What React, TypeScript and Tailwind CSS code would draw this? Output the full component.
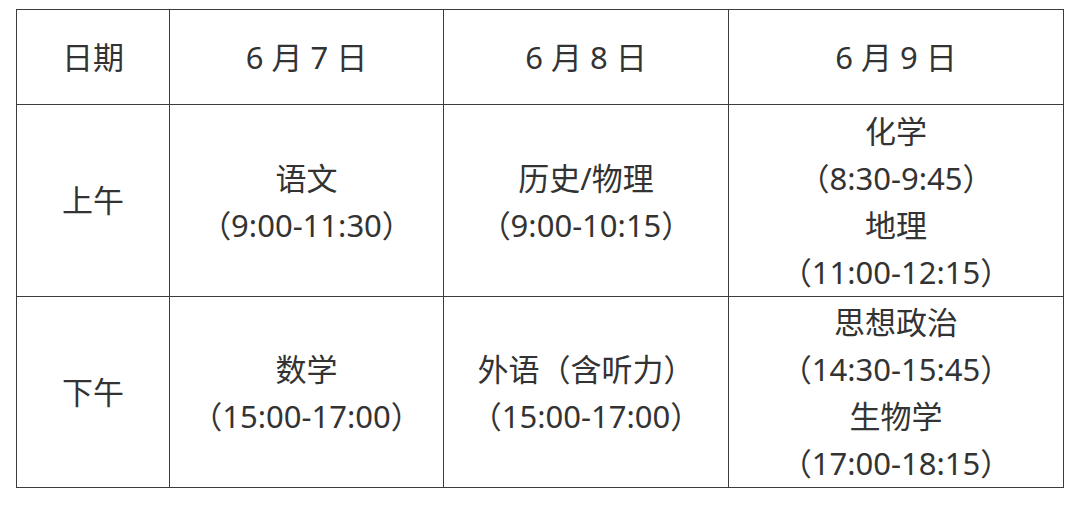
const days = ['6 月 7 日', '6 月 8 日', '6 月 9 日'];

const rows: { label: string; height: string; cells: string[][] }[] = [
  {
    label: '上午',
    height: 'h-[192px]',
    cells: [
      ['语文', '（9:00-11:30）'],
      ['历史/物理', '（9:00-10:15）'],
      ['化学', '（8:30-9:45）', '地理', '（11:00-12:15）'],
    ],
  },
  {
    label: '下午',
    height: 'h-[191px]',
    cells: [
      ['数学', '（15:00-17:00）'],
      ['外语（含听力）', '（15:00-17:00）'],
      ['思想政治', '（14:30-15:45）', '生物学', '（17:00-18:15）'],
    ],
  },
];

const cell = 'p-0 border-[1.5px] border-[#3c3c3c] text-center align-middle';

export default function App() {
  return (
    <div
      className="w-[1080px] h-[523px] bg-white pt-[9px] pl-[16px] text-[#333333]"
      style={{ fontFamily: '"Noto Sans", "Noto Sans CJK SC", sans-serif' }}
    >
      <table className="border-collapse w-[1047px] table-fixed text-[31px] leading-[47px]">
        <colgroup>
          <col className="w-[153px]" />
          <col className="w-[274px]" />
          <col className="w-[285px]" />
          <col className="w-[335px]" />
        </colgroup>
        <tbody>
          <tr className="h-[95px]">
            <td className={cell}>日期</td>
            {days.map((d) => (
              <td key={d} className={`${cell} whitespace-pre`}>
                {d}
              </td>
            ))}
          </tr>
          {rows.map((row) => (
            <tr key={row.label} className={row.height}>
              <td className={cell}>{row.label}</td>
              {row.cells.map((lines, i) => (
                <td key={i} className={`${cell} pt-[2px]`}>
                  {lines.map((l, j) => (
                    <div key={j}>{l}</div>
                  ))}
                </td>
              ))}
            </tr>
          ))}
        </tbody>
      </table>
    </div>
  );
}
